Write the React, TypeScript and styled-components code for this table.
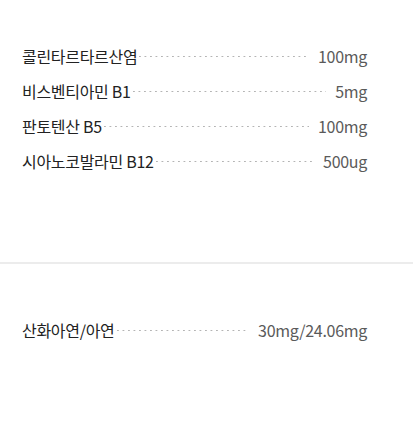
import React from 'react';
import styled, { createGlobalStyle } from 'styled-components';

const GlobalStyle = createGlobalStyle`
  body {
    margin: 0;
    background: #ffffff;
    font-family: "Noto Sans CJK KR", "Noto Sans", sans-serif;
  }
`;

const Page = styled.div`
  width: 413px;
  height: 437px;
  overflow: hidden;
  background: #ffffff;
`;

const Section = styled.section<{ $top: number; $bottom: number }>`
  padding: ${p => p.$top}px 46px ${p => p.$bottom}px 22px;
`;

const Divider = styled.hr`
  margin: 0;
  border: none;
  border-top: 2px solid #ececec;
`;

const List = styled.ul`
  list-style: none;
  margin: 0;
  padding: 0;
`;

const Row = styled.li`
  display: flex;
  align-items: center;
  height: 35px;
  font-size: 16px;
  letter-spacing: -0.3px;
`;

const Label = styled.span`
  color: #222222;
  white-space: nowrap;
`;

// dashed leader between the name and the amount
const Dots = styled.span`
  flex: 1;
  height: 1px;
  margin: 1px 9px 0 2px;
  background-image: linear-gradient(to right, #b4b4b4 2px, transparent 2px);
  background-size: 5.5px 1px;
  background-repeat: repeat-x;
`;

const Value = styled.span`
  color: #5a5a5a;
  white-space: nowrap;
`;

interface Ingredient {
  name: string;
  amount: string;
}

const vitamins: Ingredient[] = [
  { name: '콜린타르타르산염', amount: '100mg' },
  { name: '비스벤티아민 B1', amount: '5mg' },
  { name: '판토텐산 B5', amount: '100mg' },
  { name: '시아노코발라민 B12', amount: '500ug' },
];

const minerals: Ingredient[] = [{ name: '산화아연/아연', amount: '30mg/24.06mg' }];

const IngredientList = ({ items }: { items: Ingredient[] }) => (
  <List>
    {items.map(item => (
      <Row key={item.name}>
        <Label>{item.name}</Label>
        <Dots />
        <Value>{item.amount}</Value>
      </Row>
    ))}
  </List>
);

const App = () => {
  return (
    <Page>
      <GlobalStyle />
      <Section $top={38} $bottom={84}>
        <IngredientList items={vitamins} />
      </Section>
      <Divider />
      <Section $top={48} $bottom={0}>
        <IngredientList items={minerals} />
      </Section>
    </Page>
  );
};

export default App;
